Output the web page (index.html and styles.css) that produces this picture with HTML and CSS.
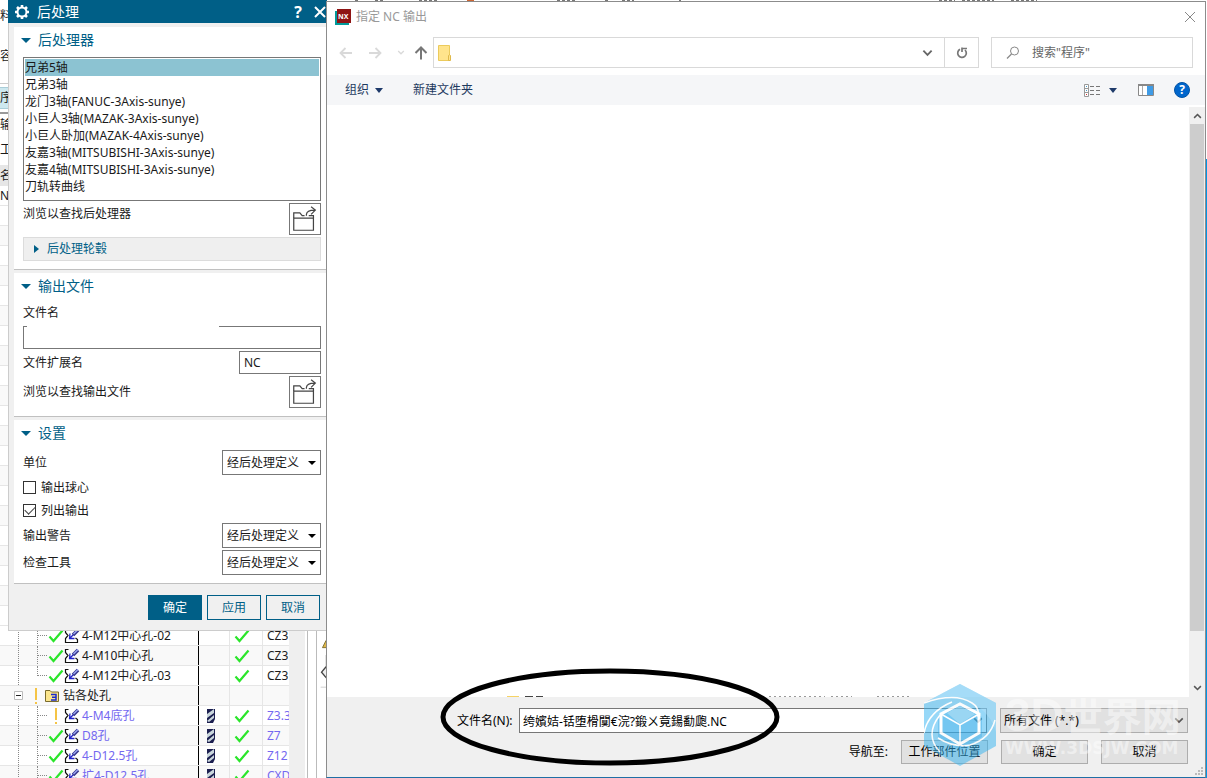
FILE: index.html
```html
<!DOCTYPE html>
<html lang="zh-CN">
<head>
<meta charset="utf-8">
<title>后处理</title>
<link rel="stylesheet" href="styles.css">
</head>
<body>
<svg class="defs" aria-hidden="true">
  <symbol id="ok" viewBox="0 0 16 14"><path d="M1.5 7.5 5.5 12 14.500 1.500" fill="none" stroke="#2be52b" stroke-width="2.200"/></symbol>
  <symbol id="op" viewBox="0 0 16 16"><path d="M4.500 1.500H1.500V4.500L4 7.500 1.500 10.500V14.500H13.500V11.500L11.500 10" fill="#fff" stroke="#111" stroke-width="1.200"/><path d="M6 5.500 5.500 10.500H10.500M5.500 10.500 9.500 6.500" fill="none" stroke="#2222c8" stroke-width="1.300"/><path d="M9 7 14 2" stroke="#34348a" stroke-width="3.600"/><path d="M9.500 6 14 1.500" stroke="#9aa6f0" stroke-width="1.500"/></symbol>
  <symbol id="drill" viewBox="0 0 10 14"><path d="M1 0H9V10L7 14H1Z" fill="#1c1f50"/><path d="M1 5 8 0v4L1 9Zm0 7L8 6v3L3 13Z" fill="#c9d6dc"/></symbol>
  <symbol id="open" viewBox="0 0 32 32"><g fill="none" stroke="#444" stroke-width="1.300"><path d="M4 15H25V28H4Z"/><path d="M4 15V9.500H10.500L13 12.500H15.500M20 12.500H25V15M17.500 12.500V11Q18 6.500 26 6.500M22.500 3 27 6.500 22.500 11"/></g></symbol>
  <symbol id="chev" viewBox="0 0 12 8"><path d="M1.500 1.500 6 6 10.500 1.500" fill="none" stroke="currentColor" stroke-width="2"/></symbol>
</svg>

<div class="desktop">
  <section class="navigator">
    <div class="edge edge-a">料</div>
    <div class="edge edge-b">容</div>
    <div class="edge edge-c">序</div>
    <div class="edge edge-d">输</div>
    <div class="edge edge-e">工序</div>
    <div class="edge edge-f">名</div>
    <div class="edge edge-g">NC</div>
    <div class="rows-blank"></div>
    <div class="tree">
      <div class="row"><div class="name leaf"><svg class="ok"><use href="#ok"/></svg><svg class="op"><use href="#op"/></svg>4-M12中心孔-02</div><div class="tool"></div><div class="path"><svg class="ok"><use href="#ok"/></svg></div><div class="cut">CZ3</div></div>
      <div class="row alt"><div class="name leaf"><svg class="ok"><use href="#ok"/></svg><svg class="op"><use href="#op"/></svg>4-M10中心孔</div><div class="tool"></div><div class="path"><svg class="ok"><use href="#ok"/></svg></div><div class="cut">CZ3</div></div>
      <div class="row"><div class="name leaf last"><svg class="ok"><use href="#ok"/></svg><svg class="op"><use href="#op"/></svg>4-M12中心孔-03</div><div class="tool"></div><div class="path"><svg class="ok"><use href="#ok"/></svg></div><div class="cut">CZ3</div></div>
      <div class="row alt"><div class="name group"><svg class="minus" viewBox="0 0 9 9"><path d="M.5.5H8.500V8.500H.5Z" fill="#fff" stroke="#bbb"/><path d="M2 4.500H7" stroke="#222"/></svg><svg class="bang" viewBox="0 0 2 16"><path d="M0 0H2V12H0ZM0 14H2V16H0Z" fill="#f5c445"/></svg><svg class="folder" viewBox="0 0 15 13"><path d="M.5 12.500V1.500H5L6.500 3H13.500V12.500Z" fill="#fbe58c" stroke="#7b6c2c"/><path d="M6 5.500H11V11H6M7 8.300H11" fill="none" stroke="#1a2acc" stroke-width="1.500"/></svg>钻各处孔</div><div class="tool"></div><div class="path"></div><div class="cut"></div></div>
      <div class="row todo"><div class="name leaf"><span class="ok"><svg class="bang" viewBox="0 0 2 16"><path d="M0 0H2V12H0ZM0 14H2V16H0Z" fill="#f5c445"/></svg></span><svg class="op"><use href="#op"/></svg>4-M4底孔</div><div class="tool"><svg class="drill"><use href="#drill"/></svg></div><div class="path"><svg class="ok"><use href="#ok"/></svg></div><div class="cut">Z3.3</div></div>
      <div class="row alt todo"><div class="name leaf"><svg class="ok"><use href="#ok"/></svg><svg class="op"><use href="#op"/></svg>D8孔</div><div class="tool"><svg class="drill"><use href="#drill"/></svg></div><div class="path"><svg class="ok"><use href="#ok"/></svg></div><div class="cut">Z7</div></div>
      <div class="row todo"><div class="name leaf"><svg class="ok"><use href="#ok"/></svg><svg class="op"><use href="#op"/></svg>4-D12.5孔</div><div class="tool"><svg class="drill"><use href="#drill"/></svg></div><div class="path"><svg class="ok"><use href="#ok"/></svg></div><div class="cut">Z12</div></div>
      <div class="row alt todo"><div class="name leaf"><svg class="ok"><use href="#ok"/></svg><svg class="op"><use href="#op"/></svg>扩4-D12.5孔</div><div class="tool"><svg class="drill"><use href="#drill"/></svg></div><div class="path"><svg class="ok"><use href="#ok"/></svg></div><div class="cut">CXD</div></div>
    </div>
  </section>
  <svg class="dock" viewBox="0 0 11 148" aria-hidden="true"><path d="M6 12 10 4H11V12Z" fill="#e0b84a" stroke="#7b6c2c"/><path d="M9 20H11V46H9Z" fill="#ddd"/><path d="M10 33 5 39 10 45" fill="#eee" stroke="#444" stroke-width="1.500"/><path d="M4 55.500H11" stroke="#ccc"/></svg>
  <svg class="topstrip" viewBox="0 0 880 1" preserveAspectRatio="none" aria-hidden="true"><path d="M28 .5H31M48 .5h8M92 .5h20M230 .5h18M278 .5h3M295 .5h12M352 .5h2M612 .5h16M635 .5h32M684 .5h26" stroke="#777" stroke-dasharray="3 2"/><path d="M140 .5H147" stroke="#c63"/></svg>

  <form class="post">
    <header class="post-title">
      <svg class="gear" viewBox="0 0 16 16"><circle cx="8" cy="8" r="4.500" fill="none" stroke="#fff" stroke-width="2"/><path d="M8 1V3M8 13V15M1 8H3M13 8H15M3 3 4.500 4.500M11.500 11.500 13 13M3 13 4.500 11.500M11.500 4.500 13 3" stroke="#fff" stroke-width="2.600"/></svg>
      <h1>后处理</h1>
      <button type="button" class="plain help" aria-label="帮助">?</button>
      <button type="button" class="plain" aria-label="关闭"><svg class="x" viewBox="0 0 12 12"><path d="M1 1 11 11M11 1 1 11" stroke="#fff" stroke-width="2"/></svg></button>
    </header>

    <section class="panel">
      <h2>后处理器</h2>
      <ul class="list" role="listbox" aria-label="后处理器">
        <li role="option" aria-selected="true" class="selected">兄弟5轴</li>
        <li role="option">兄弟3轴</li>
        <li role="option">龙门3轴(FANUC-3Axis-sunye)</li>
        <li role="option">小巨人3轴(MAZAK-3Axis-sunye)</li>
        <li role="option">小巨人卧加(MAZAK-4Axis-sunye)</li>
        <li role="option">友嘉3轴(MITSUBISHI-3Axis-sunye)</li>
        <li role="option">友嘉4轴(MITSUBISHI-3Axis-sunye)</li>
        <li role="option">刀轨转曲线</li>
      </ul>
      <div class="line browse top"><span>浏览以查找后处理器</span><button type="button" class="open" aria-label="浏览以查找后处理器"><svg><use href="#open"/></svg></button></div>
      <button type="button" class="hub">后处理轮毂</button>
    </section>

    <section class="panel">
      <h2 class="tight">输出文件</h2>
      <label class="caption" for="fname">文件名</label>
      <div class="fname"><input id="fname" type="text"></div>
      <div class="line ext"><label for="ext">文件扩展名</label><input id="ext" type="text" value="NC"></div>
      <div class="line browse"><span>浏览以查找输出文件</span><button type="button" class="open" aria-label="浏览以查找输出文件"><svg><use href="#open"/></svg></button></div>
    </section>

    <section class="panel">
      <h2>设置</h2>
      <div class="line"><label for="unit">单位</label><span class="drop"><select id="unit"><option>经后处理定义</option></select></span></div>
      <div class="checks">
        <label><input type="checkbox">输出球心</label>
        <label><input type="checkbox" checked>列出输出</label>
      </div>
      <div class="line"><label for="warn">输出警告</label><span class="drop"><select id="warn"><option>经后处理定义</option></select></span></div>
      <div class="line next"><label for="check">检查工具</label><span class="drop"><select id="check"><option>经后处理定义</option></select></span></div>
    </section>

    <footer class="post-actions">
      <button type="button" class="primary">确定</button>
      <button type="button">应用</button>
      <button type="button">取消</button>
    </footer>
  </form>

  <form class="dialog">
    <header class="dialog-title">
      <svg class="nx" viewBox="0 0 16 16"><path d="M0 2H14V16H0Z" fill="#009a9a"/><path d="M2 0H16V14H2Z" fill="#8e1414"/><text x="3" y="10">NX</text></svg>
      <h1>指定 NC 输出</h1>
      <button type="button" class="plain" aria-label="关闭"><svg class="x" viewBox="0 0 12 12"><path d="M1 1 11 11M11 1 1 11" stroke="#888"/></svg></button>
    </header>
    <div class="nav">
      <div class="arrows">
        <button type="button" class="plain" aria-label="后退"><svg class="arrow" viewBox="0 0 14 14"><path d="M13 7H2M6.500 2 1.500 7 6.500 12" fill="none" stroke="#d9d9d9" stroke-width="1.800"/></svg></button>
        <button type="button" class="plain" aria-label="前进"><svg class="arrow" viewBox="0 0 14 14"><path d="M1 7H12M7.500 2 12.500 7 7.500 12" fill="none" stroke="#d9d9d9" stroke-width="1.800"/></svg></button>
        <button type="button" class="plain faint" aria-label="最近位置"><svg class="tiny"><use href="#chev"/></svg></button>
        <button type="button" class="plain up" aria-label="上移"><svg class="arrow" viewBox="0 0 14 14"><path d="M7 13.500V2M1.500 7 7 1.500 12.500 7" fill="none" stroke="#777" stroke-width="2"/></svg></button>
      </div>
      <div class="address">
        <svg class="dir" viewBox="0 0 14 16"><path d="M.5.500H11.500V15.500H.5Z" fill="#ffe48c" stroke="#eccb5c"/><path d="M10.500 15.500V10.500Q12 9 12.500 10.500V15.500Z" fill="#ffe48c" stroke="#dfb94a"/></svg>
        <button type="button" class="plain more" aria-label="展开"><svg class="chev"><use href="#chev"/></svg></button>
        <button type="button" class="plain refresh" aria-label="刷新"><svg viewBox="0 0 12 12"><path d="M8 2.300A4.300 4.300 0 1 1 3 3M6 .500V5M1 1.500H6" fill="none" stroke="#777" stroke-width="1.700" transform="matrix(-1 0 0 1 12 0)"/></svg></button>
      </div>
      <div class="search">
        <svg viewBox="0 0 14 14"><circle cx="8.500" cy="5" r="4" fill="none" stroke="#888"/><path d="M5.500 8 1 12.500" stroke="#888" stroke-width="1.300"/></svg>
        <input type="text" aria-label="搜索" placeholder='搜索"程序"'>
      </div>
    </div>
    <div class="tools">
      <button type="button" class="plain org">组织</button>
      <button type="button" class="plain">新建文件夹</button>
      <span class="grow"></span>
      <button type="button" class="plain org view" aria-label="视图"><svg viewBox="0 0 16 13"><path d="M.5.500H4.500V12.500H.5ZM1 4.500H4M1 8.500H4" fill="#fff" stroke="#999"/><path d="M6 2.500H10M12 2.500H16M6 6.500H10M12 6.500H16M6 10.500H10M12 10.500H16" stroke="#777"/><path d="M2 2h1v1H2ZM2 6h1v1H2Z" fill="#49c"/><path d="M2 10h1v1H2Z" fill="#c33"/></svg></button>
      <button type="button" class="plain pane" aria-label="预览窗格"><svg viewBox="0 0 16 12"><path d="M.5 1.500H15.500V11.500H.5Z" fill="#fff" stroke="#888"/><path d="M0 1H16" stroke="#888" stroke-width="2"/><path d="M4.500 2V11" stroke="#aaa"/><path d="M9 2H15V11H9Z" fill="#3f9be6"/></svg></button>
      <button type="button" class="help-dot" aria-label="帮助">?</button>
    </div>
    <div class="files">
      <div class="file-area"><svg viewBox="0 0 420 1" aria-hidden="true"><path d="M0 .5H12" stroke="#f6d365"/><path d="M18 .5H26M29 .5H36" stroke="#444"/><path d="M262 .5H318M324 .5H345M370 .5H402" stroke="#999" stroke-dasharray="2 3"/></svg></div>
      <div class="scroll"><svg><use href="#chev"/></svg><div class="thumb"></div><svg><use href="#chev"/></svg></div>
    </div>
    <footer class="dialog-foot">
      <div class="foot-line">
        <label for="target">文件名(N):</label>
        <div class="combo"><input id="target" type="text" value="绔嬪姞-铦堕榾闃€浣?鍛ㄨ竟鍚勫瓟.NC"><svg><use href="#chev"/></svg></div>
        <div class="combo type"><select aria-label="文件类型"><option>所有文件 (*.*)</option></select><svg><use href="#chev"/></svg></div>
      </div>
      <div class="foot-line actions">
        <span>导航至:</span>
        <button type="button">工作部件位置</button>
        <button type="button">确定</button>
        <button type="button">取消</button>
      </div>
      <svg class="grip" viewBox="0 0 8 8"><path d="M6 0h2v2H6ZM3 3h2v2H3ZM6 3h2v2H6ZM0 6h2v2H0ZM3 6h2v2H3ZM6 6h2v2H6Z" fill="#bbb"/></svg>
    </footer>
  </form>

  <svg class="mark" viewBox="0 0 340 98" aria-hidden="true"><ellipse cx="170" cy="49" rx="167" ry="46" fill="none" stroke="#000" stroke-width="5"/></svg>
  <div class="brand" aria-hidden="true">
    <svg viewBox="0 0 72 82"><path d="M36 0 72 19V62L36 82 0 62V19Z" fill="#35b4f2" fill-opacity=".6"/><path d="M36 0 72 19V48Q64 19 25 12 12 14 0 19Z" fill="#a5dcf8" fill-opacity=".5"/><path d="M36 21 58 33V53L36 66 14 53V33Z" fill="#35aae8" fill-opacity=".5"/><path d="M17 30V49L36 60 55 49V30L36 20Z" fill="none" stroke="#fff" stroke-width="3"/><path d="M23 29 36 22 51 30 36 40Z" fill="#9bd7f4" fill-opacity=".7"/><path d="M17 30 36 41 55 30M36 41V60M0 49Q4 28 28 18M0 19Q31 8 48 19 56 24 54 33M16 68Q0 51 16 31M14 54Q30 64 46 61 66 55 71 36" fill="none" stroke="#fff" stroke-width="1.500"/></svg>
    <div class="brand-text"><div class="brand-name"><b>3D</b>世界网</div><div class="brand-site">WWW.3DSJW.COM</div></div>
  </div>
</div>
</body>
</html>
```

FILE: styles.css
```css
* { box-sizing: border-box; }
body {
  margin: 0;
  font: 12px/16px "Noto Sans", "Noto Sans CJK SC", sans-serif;
  color: #1a1a1a;
}
h1, h2, ul { margin: 0; padding: 0; font-weight: normal; list-style: none; }
button, input, select { font: inherit; color: inherit; margin: 0; border-radius: 0; }
svg { display: block; flex: none; }
.defs { position: absolute; width: 0; height: 0; }
.desktop { position: relative; height: 100vh; overflow: hidden; background: linear-gradient(#fff 159px, #0095e6 159px) right / 1px 100% no-repeat #fff; }
.plain { border: 0; padding: 0; background: none; display: flex; align-items: center; }

/* operation navigator */
.navigator { width: 308px; height: 100%; border-right: 1px solid #bbb; display: flex; flex-direction: column; overflow: hidden; }
.edge { width: 24px; overflow: hidden; white-space: nowrap; flex: none; display: flex; align-items: center; }
.edge-a { height: 32px; }
.edge-b { height: 52px; padding-bottom: 4px; border-bottom: 1px solid #ccc; }
.edge-c { height: 22px; margin-top: 3px; background: #cde8ef; border: 1px solid #a9cdd8; border-width: 1px 0; }
.edge-d { height: 26px; margin-top: 3px; padding-bottom: 2px; border-top: 2px solid #999; }
.edge-e { height: 27px; padding-bottom: 3px; }
.edge-f { height: 21px; background: #e6e6e6; }
.edge-g { height: 20px; border-bottom: 1px solid #e6e6e6; }
.rows-blank { height: 420px; flex: none; background: repeating-linear-gradient(#fff 0 19px, #e6e6e6 19px 20px, #f9f9f9 20px 39px, #e6e6e6 39px 40px); }
.tree { width: 305px; border-right: 16px solid #efefef; }
.row { display: grid; grid-template-columns: 199px 31px 33px 26px; height: 20px; border-bottom: 1px solid #e6e6e6; font-size: 12px; line-height: 19px; white-space: nowrap; }
.alt { background: #f9f9f9; }
.todo { color: #7468f0; }
.name { display: flex; align-items: center; border-right: 1px solid #000; overflow: hidden; }
.leaf { margin-left: 18px; border-left: 1px dotted #888; padding-left: 18px; }
.leaf::before { content: ""; width: 10px; height: 20px; border-left: 1px dotted #888; background: repeating-linear-gradient(90deg, #888 0 1px, transparent 1px 2px) 0 9px / 10px 1px no-repeat; }
.last::before { height: 10px; align-self: flex-start; }
.name .ok { width: 16px; height: 14px; display: flex; justify-content: center; align-items: center; }
.op { width: 16px; height: 16px; margin-right: 2px; }
.group { padding-left: 14px; }
.minus { width: 9px; height: 9px; margin-right: 12px; }
.bang { width: 2px; height: 16px; }
.folder { width: 15px; height: 13px; margin: 0 3px 0 8px; }
.tool, .path { display: flex; align-items: center; justify-content: center; border-right: 1px solid #e6e6e6; }
.tool { padding-right: 6px; }
.path { padding-right: 9px; }
.path .ok { width: 16px; height: 14px; }
.drill { width: 10px; height: 14px; }
.cut { padding-left: 4px; overflow: hidden; }
.dock { position: absolute; left: 316px; bottom: 0; width: 11px; height: 148px; border-left: 1px solid #bbb; background: #fff; }
.topstrip { position: absolute; left: 327px; top: 0; height: 1px; width: calc(100% - 327px); }

/* postprocess window */
.post { position: absolute; left: 8px; top: 0; width: 319px; background: #f0f0f0; border: 1px solid #ccc; border-width: 0 0 1px 1px; margin: 0; }
.post-title { display: flex; align-items: center; height: 23px; margin-left: -1px; padding: 0 1px 0 6px; background: #005f87; color: #fff; }
.post-title h1 { flex: 1; font-size: 14px; margin-left: 7px; }
.gear { width: 16px; height: 16px; }
.help { font: bold 16px/20px "Open Sans", sans-serif; margin-right: 12px; }
.x { width: 12px; height: 12px; }
.panel { margin: 4px 0 0 5px; padding: 0 6px 8px 9px; background: #fff; border-bottom: 1px solid #c0c0c0; }
.panel + .panel { margin-top: 3px; }
.panel h2 { display: flex; align-items: center; height: 26px; margin-bottom: 4px; font-size: 14px; color: #005f87; }
.panel .tight { margin-bottom: 0; }
.panel h2::before { content: ""; border: 5px solid transparent; border-top-color: currentColor; border-bottom: 0; margin: 0 7px 0 -2px; }
.list { height: 144px; border: 1px solid #777; padding: 1px; margin-bottom: 2px; }
.list li { height: 17px; line-height: 17px; white-space: nowrap; }
.list .selected { background: #8cc3d2; }
.line { display: flex; align-items: center; justify-content: space-between; }
.browse { height: 32px; }
.top span { align-self: flex-start; line-height: 22px; }
.open { width: 32px; height: 32px; padding: 0; border: 1px solid #777; background: #fff; }
.open svg { width: 30px; height: 30px; }
.hub { display: flex; align-items: center; width: 100%; height: 24px; margin-top: 2px; padding: 0 10px; border: 1px solid #dcdcdc; background: #efefef; color: #005f87; }
.hub::before { content: ""; border: 4px solid transparent; border-left: 5px solid; border-right: 0; margin-right: 8px; }
.caption { display: block; height: 27px; line-height: 28px; }
.panel input[type="text"] { height: 23px; width: 100%; border: 1px solid #777; padding: 0 4px; background: #fff; display: block; }
.fname { position: relative; }
.fname::before { content: ""; position: absolute; left: 4px; top: 0; width: 192px; height: 1px; background: #fff; }
.ext { margin: 2px 0; }
.line.ext input { width: 82px; }
.drop { position: relative; }
.drop select { display: block; appearance: none; width: 99px; height: 25px; padding: 0 4px; border: 1px solid #777; background: #fff; }
.drop::after { content: ""; position: absolute; right: 5px; top: 11px; border: 4px solid transparent; border-top-color: #000; border-bottom: 0; pointer-events: none; }
.checks { margin: 1px 0; }
.checks label { display: flex; align-items: center; height: 23px; gap: 5px; }
.checks input { appearance: none; width: 13px; height: 13px; border: 1px solid #333; background: #fff; display: grid; place-items: center; }
.checks input:checked::before { content: ""; width: 9px; height: 5px; border: solid #444; border-width: 0 0 1px 1px; transform: rotate(-45deg); margin-bottom: 3px; }
.next { margin-top: 2px; }
.post-actions { display: flex; justify-content: flex-end; gap: 5px; padding: 11px 7px 10px; }
.post-actions button { width: 54px; height: 25px; padding: 0; border: 1px solid #005f87; background: #f0f0f0; color: #005f87; }
.post-actions .primary { background: #005f87; color: #fff; }

/* file dialog */
.dialog { position: absolute; left: 326px; right: 1px; top: 1px; bottom: 0; margin: 0; display: flex; flex-direction: column; background: #fff; border: 1px solid #8c8c8c; border-bottom-color: #1f6fa5; }
.dialog-title { display: flex; align-items: center; height: 29px; padding: 0 9px 0 8px; color: #999; }
.dialog-title h1 { flex: 1; font-size: 12px; margin-left: 5px; }
.nx { width: 16px; height: 16px; }
.nx text { font: bold 7px "Open Sans", sans-serif; fill: #fff; }
.nav { display: flex; height: 31px; margin: 6px 12px 7px 12px; gap: 12px; }
.arrows { display: flex; align-items: center; width: 94px; gap: 15px; margin-right: -12px; }
.arrow { width: 14px; height: 14px; }
.faint { color: #d9d9d9; }
.tiny { width: 8px; height: 5px; }
.up { margin-left: -6px; }
.address, .search { border: 1px solid #d9d9d9; display: flex; align-items: center; }
.address { flex: 1; padding-left: 4px; color: #666; }
.dir { width: 14px; height: 16px; }
.more { margin-left: auto; padding: 0 11px; }
.chev { width: 11px; height: 8px; }
.refresh { width: 34px; height: 29px; border-left: 1px solid #d9d9d9; justify-content: center; }
.refresh svg { width: 12px; height: 12px; }
.search { width: 202px; padding-left: 14px; gap: 12px; }
.search svg { width: 14px; height: 14px; }
.search input { border: 0; padding: 0; width: 130px; background: none; }
.search input::placeholder { color: #666; opacity: 1; }
.tools { display: flex; align-items: center; gap: 30px; height: 30px; padding: 0 15px 0 18px; background: #f5f6f8; color: #1e3a5f; }
.grow { flex: 1; }
.org { gap: 6px; }
.org::after { content: ""; border: 4px solid transparent; border-top: 5px solid #1e3a6a; border-bottom: 0; }
.view { gap: 9px; margin-right: -9px; }
.view svg { width: 16px; height: 13px; }
.pane { margin-right: -10px; }
.pane svg { width: 16px; height: 12px; }
.help-dot { width: 16px; height: 16px; padding: 0; border: 1px solid #0053a6; border-radius: 8px; background: #0066cc; color: #fff; font: bold 12px/14px "Open Sans", sans-serif; }
.files { display: flex; flex: 1; min-height: 0; }
.file-area { flex: 1; display: flex; align-items: flex-end; padding-left: 180px; }
.file-area svg { width: 420px; height: 1px; }
.scroll { width: 16px; margin-top: 2px; padding: 5px 0; background: #f0f0f0; display: flex; flex-direction: column; align-items: center; color: #555; }
.scroll svg { width: 9px; height: 8px; }
.scroll svg:first-child { transform: rotate(180deg); }
.thumb { width: 14px; flex: 1; margin: 4px 0 53px; background: #cdcdcd; }
.dialog-foot { position: relative; padding: 11px 17px 13px 0; background: #f0f0f0; color: #000; }
.foot-line { display: flex; align-items: center; padding-left: 130px; }
.foot-line label { width: 62px; white-space: nowrap; }
.combo { position: relative; flex: 1; margin-right: 13px; }
.combo input, .combo select { display: block; width: 100%; height: 25px; border: 1px solid #777; background: #fff; padding: 0 3px; appearance: none; }
.combo svg { position: absolute; right: 4px; top: 9px; width: 10px; height: 7px; color: #555; pointer-events: none; }
.combo.type { flex: 0 0 188px; margin: 0; }
.type select { border-color: #adadad; background: #e1e1e1; }
.actions { justify-content: flex-end; gap: 13px; margin-top: 7px; }
.actions button { width: 87px; height: 24px; padding: 0; border: 1px solid #adadad; background: #e1e1e1; }
.grip { position: absolute; right: 2px; bottom: 2px; width: 8px; height: 8px; }

/* annotation and watermark over the windows */
.mark { position: absolute; left: 440px; bottom: 12px; width: 340px; height: 98px; pointer-events: none; }
.brand { position: absolute; right: 22px; bottom: 12px; display: flex; align-items: center; gap: 9px; pointer-events: none; }
.brand > svg { width: 72px; height: 82px; opacity: .85; }
.brand-text { width: 180px; color: rgba(255, 255, 255, .45); white-space: nowrap; }
.brand-name { font: bold 39px/44px "Open Sans", "Noto Sans CJK SC", sans-serif; }
.brand-name b { font: bold 46px/44px "Liberation Sans", sans-serif; }
.brand-site { font: bold 17px/20px "DejaVu Sans", sans-serif; }
```
